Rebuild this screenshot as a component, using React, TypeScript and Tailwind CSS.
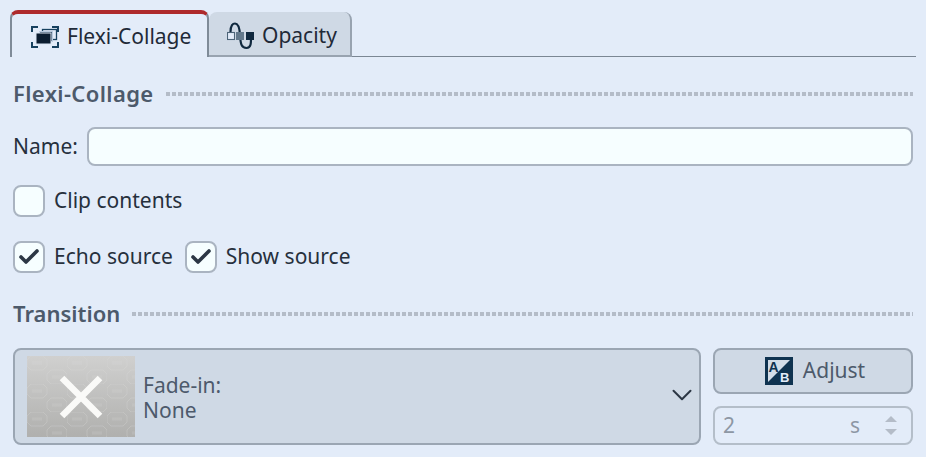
import { Check, ChevronDown } from "lucide-react"

const FlexiIcon = () => (
    <svg width="28" height="22" viewBox="0 0 28 22" fill="none">
        <path d="M1 6V1h6M21 1h6v5M1 16v5h6M21 21h6v-5" stroke="#17415f" strokeWidth="2" />
        <rect x="11.5" y="3.5" width="14" height="10" fill="#e3ecf9" stroke="#17415f" strokeWidth="1.3" />
        <rect x="8.5" y="5.5" width="13" height="10" fill="#17334d" stroke="#b9cbe0" strokeWidth="1" />
        <rect x="5" y="7" width="15" height="11" fill="#0b1d30" stroke="#dbe6f4" strokeWidth="1" />
    </svg>
)

const OpacityIcon = () => (
    <svg width="27" height="28" viewBox="0 0 27 28" fill="none">
        <path d="M3.5 10C3.5 3 6 1.5 8 1.5S12.5 4 13 13s1.5 13 6.5 13S24 20 24 13" stroke="#10293f" strokeWidth="2.2" />
        <rect x="0.5" y="10.5" width="7" height="7" fill="#e3ecf9" stroke="#4c6478" strokeWidth="1.1" />
        <rect x="9" y="10" width="8" height="8" fill="#63798c" />
        <rect x="19" y="10" width="8" height="8" fill="#10293f" />
    </svg>
)

const AdjustIcon = () => (
    <svg width="28" height="28" viewBox="0 0 28 28">
        <rect width="28" height="28" fill="#0f3350" />
        <path d="M3 25 25 3H3z" fill="#d3dde8" />
        <text x="3.5" y="15" fontSize="14" fontWeight="700" fill="#0f3350" fontFamily="Liberation Sans, sans-serif">A</text>
        <text x="15" y="25" fontSize="13" fontWeight="700" fill="#e3ecf9" fontFamily="Liberation Sans, sans-serif">B</text>
    </svg>
)

const NoneThumb = () => (
    <svg width="108" height="81" viewBox="0 0 108 81" className="block">
        <defs>
            <linearGradient id="thumb" x1="0" y1="0" x2="0" y2="1">
                <stop offset="0" stopColor="#d0d0cf" />
                <stop offset="1" stopColor="#b0b0ae" />
            </linearGradient>
            <pattern id="hex" width="40" height="28" patternUnits="userSpaceOnUse">
                <path d="M4 0h12l4 4v6l-4 4H4l-4-4V4zM24 14h12l4 4v6l-4 4H24l-4-4v-6z" fill="none" stroke="#dcdcda" strokeOpacity="0.3" />
                <path d="M5 7h10M25 21h10" stroke="#dcdcda" strokeOpacity="0.15" strokeWidth="3" />
            </pattern>
        </defs>
        <rect width="108" height="81" fill="url(#thumb)" />
        <rect width="108" height="81" fill="url(#hex)" />
        <path d="M35 22 73 60M73 22 35 60" stroke="#fafaf8" strokeWidth="6.5" />
    </svg>
)

const Heading = ({ title, wide }: { title: string; wide?: boolean }) => (
    <div className="flex items-center">
        <span className={wide ? "text-[22px] leading-7 font-semibold text-[#4d5a6b] tracking-[0.38px]" : "text-[22px] leading-7 font-semibold text-[#4d5a6b]"}>{title}</span>
        <span className="ml-3 flex-1 h-1 mt-0.5 bg-[repeating-linear-gradient(90deg,#b4bcc8_0,#b4bcc8_4px,transparent_4px,transparent_6px)]" />
    </div>
)

const CheckRow = ({ label, checked }: { label: string; checked?: boolean }) => (
    <div className="flex items-center">
        <span className="w-8 h-8 rounded-lg border-2 border-[#aab4c1] bg-[#f6feff] flex items-center justify-center">
            {checked && <Check size={24} strokeWidth={3.6} className="text-[#2c3745]" />}
        </span>
        <span className="ml-[9px] text-[21px] text-[#26303d]">{label}</span>
    </div>
)

export default function App() {
    return (
        <div className="w-[926px] h-[457px] overflow-hidden bg-[#e3ecf9] px-2.5 pt-2.5 font-['Noto_Sans','Open_Sans',sans-serif]">
            <div className="w-[906px] h-[47px] flex items-end border-b border-[#7b8794]">
                <div className="w-[199px] h-[47px] -mb-px flex items-center pl-[19px] pt-0.5 rounded-t-lg border-t-4 border-t-[#ae2a2c] border-l-2 border-l-[#7f8b98] border-r-2 border-r-[#7f8b98] bg-[#e3ecf9]">
                    <FlexiIcon />
                    <span className="ml-2 text-[21px] text-[#1f2a38]">Flexi-Collage</span>
                </div>
                <div className="w-[143px] h-[45px] -mb-px flex items-center pl-[18px] pt-1 rounded-t-lg border-r-2 border-b-2 border-[#98a3b0] bg-[#cfd9e5]">
                    <OpacityIcon />
                    <span className="ml-2 text-[21px] text-[#1f2a38]">Opacity</span>
                </div>
            </div>

            <div className="w-[900px] ml-[3px] pt-[22px]">
                <Heading title="Flexi-Collage" wide />
                <div className="mt-5 flex items-center">
                    <span className="text-[21px] text-[#26303d]">Name:</span>
                    <div className="ml-[9px] flex-1 h-[39px] rounded-lg border-2 border-[#aab4c1] bg-[#f6feff]" />
                </div>
                <div className="mt-[19px]">
                    <CheckRow label="Clip contents" />
                </div>
                <div className="mt-6 flex gap-3">
                    <CheckRow label="Echo source" checked />
                    <CheckRow label="Show source" checked />
                </div>
                <div className="mt-[26px]">
                    <Heading title="Transition" />
                </div>
                <div className="mt-[21px] flex gap-3">
                    <div className="w-[688px] h-[97px] rounded-lg border-2 border-[#9ba6b3] bg-[#cfd9e5] flex items-center pl-3">
                        <NoneThumb />
                        <div className="ml-2 flex-1 pt-0.5 text-[21px] leading-[25px] text-[#4d5a6b]">
                            <div>Fade-in:</div>
                            <div>None</div>
                        </div>
                        <ChevronDown size={34} strokeWidth={1.4} className="text-[#2c3745] mb-1" />
                    </div>
                    <div className="flex-1 flex flex-col gap-[12px]">
                        <div className="h-[46px] rounded-lg border-2 border-[#9ba6b3] bg-[#cfd9e5] flex items-center justify-center gap-2.5 pl-1">
                            <AdjustIcon />
                            <span className="text-[21px] text-[#4d5a6b]">Adjust</span>
                        </div>
                        <div className="h-[39px] rounded-lg border-2 border-[#b4bec9] flex items-center pl-2 pr-3.5 text-[21px] text-[#8d97a4]">
                            <span>2</span>
                            <span className="ml-auto mr-[25px]">s</span>
                            <div className="flex flex-col gap-[7px]">
                                <span className="w-0 h-0 border-x-[6px] border-x-transparent border-b-[6px] border-b-[#b4bcc8]" />
                                <span className="w-0 h-0 border-x-[6px] border-x-transparent border-t-[6px] border-t-[#b4bcc8]" />
                            </div>
                        </div>
                    </div>
                </div>
            </div>
        </div>
    )
}
